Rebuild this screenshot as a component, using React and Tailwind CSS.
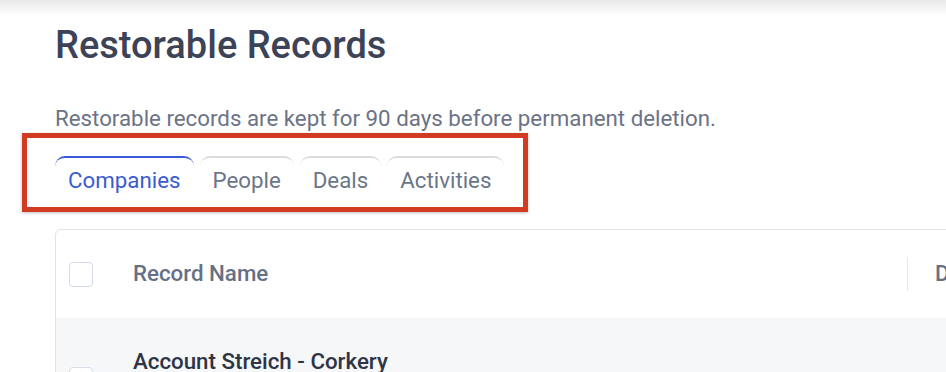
import React from 'react';

const tabs = [
  { label: 'Companies', active: true },
  { label: 'People' },
  { label: 'Deals' },
  { label: 'Activities' },
];

function Checkbox() {
  return <span className="block w-6 h-[25px] rounded-[4px] border border-[#d6dcea] bg-white" />;
}

export default function App() {
  return (
    <div
      className="relative w-[946px] h-[372px] overflow-hidden bg-white"
      style={{ fontFamily: 'Roboto, "Liberation Sans", sans-serif' }}
    >
      {/* header shadow */}
      <div className="h-[16px] bg-gradient-to-b from-[#e9e9e9] to-white" />

      <div className="pl-[55px] w-[1200px]">
        <h1 className="mt-[6px] text-[38px] leading-[46px] font-medium text-[#3d4357]">Restorable Records</h1>

        <p className="mt-[37px] text-[22.3px] leading-[26px] text-[#6b7385]">
          Restorable records are kept for 90 days before permanent deletion.
        </p>

        {/* tabs */}
        <div className="mt-[25px] flex gap-[6px]">
          {tabs.map((t) => (
            <button
              key={t.label}
              className={`px-[13px] pt-[8px] pb-[7px] text-[22.3px] leading-[28px] rounded-t-[10px] border-t-2 ${
                t.active ? 'border-[#3a5bd9] text-[#3b5cd0]' : 'border-[#dcdcdc] text-[#6b7688]'
              }`}
            >
              {t.label}
            </button>
          ))}
        </div>

        {/* table */}
        <div className="mt-[28px] border border-[#dde3ee] rounded-tl-[6px] bg-white">
          <div className="h-[88px] flex items-center">
            <div className="pl-[13px] w-[77px] shrink-0">
              <Checkbox />
            </div>
            <div className="w-[774px] shrink-0 text-[22.3px] font-medium text-[#667085]">Record Name</div>
            <div className="w-px h-[34px] bg-[#e6e8ec] shrink-0" />
            <div className="pl-[27px] whitespace-nowrap text-[22.3px] font-medium text-[#667085]">Deleted By</div>
          </div>
          <div className="h-[80px] bg-[#f6f7f9] flex items-start pt-[29px]">
            <div className="pl-[13px] w-[77px] pt-[20px] shrink-0">
              <Checkbox />
            </div>
            <div className="whitespace-nowrap text-[22.3px] leading-[28px] font-medium text-[#2e3445]">Account Streich - Corkery</div>
          </div>
        </div>
      </div>

      {/* annotation box around tabs */}
      <div className="absolute left-[22px] top-[133px] w-[506px] h-[79px] border-[5px] border-[#d13b22] shadow-[0_1px_3px_rgba(0,0,0,0.25)]" />
    </div>
  );
}
